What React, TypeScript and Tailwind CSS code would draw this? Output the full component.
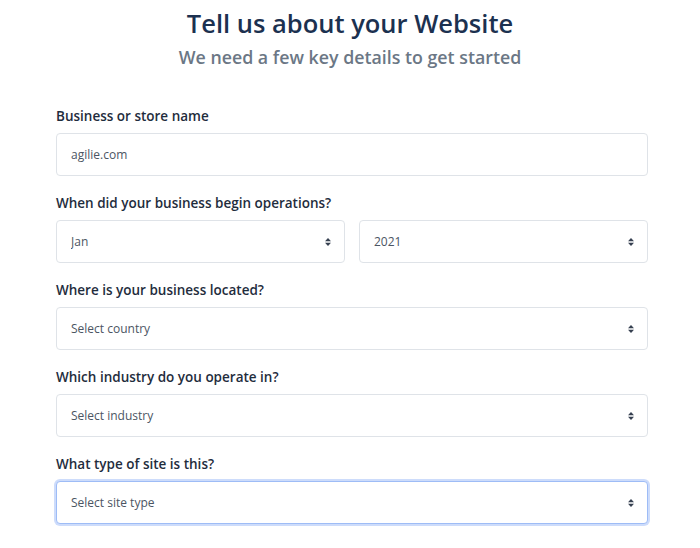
import { useState } from 'react'

const months = ['Jan', 'Feb', 'Mar', 'Apr', 'May', 'Jun', 'Jul', 'Aug', 'Sep', 'Oct', 'Nov', 'Dec']
const years = ['2024', '2023', '2022', '2021', '2020', '2019']

function Chevrons() {
  return (
    <svg width="8" height="10" viewBox="0 0 8 10" className="pointer-events-none absolute right-[13px] top-1/2 -translate-y-1/2">
      <path d="M4 1 L7 4.2 H1 Z" fill="#374151" />
      <path d="M4 9 L7 5.8 H1 Z" fill="#374151" />
    </svg>
  )
}

function Select({
  value,
  options,
  placeholder,
  focused,
}: {
  value?: string
  options: string[]
  placeholder?: string
  focused?: boolean
}) {
  const [v, setV] = useState(value ?? '')
  return (
    <div className="relative w-full">
      <select
        value={v}
        onChange={(e) => setV(e.target.value)}
        className={`h-[43px] w-full appearance-none rounded-[4px] bg-white pl-[14px] pr-8 text-[12px] text-[#4b5563] outline-none ${
          focused ? 'border border-[#9ebcf6] shadow-[0_0_0_2px_#cddcfb]' : 'border border-[#dfe3e8]'
        }`}
      >
        {placeholder && <option value="">{placeholder}</option>}
        {options.map((o) => (
          <option key={o} value={o}>
            {o}
          </option>
        ))}
      </select>
      <Chevrons />
    </div>
  )
}

function Field({ label, children }: { label: string; children: React.ReactNode }) {
  return (
    <div>
      <label className="mb-[8px] block text-[13.5px] font-semibold leading-[18px] text-[#1f2d3d]">{label}</label>
      {children}
    </div>
  )
}

export default function App() {
  const [name, setName] = useState('agilie.com')

  return (
    <div className="min-h-screen bg-white font-['Open_Sans',sans-serif]">
      {/* Header */}
      <div className="pt-[4px] text-center">
        <h1 className="text-[25.5px] font-semibold leading-[38px] text-[#1c3150]">Tell us about your Website</h1>
        <p className="mt-[3px] text-[17.8px] font-semibold leading-[24px] text-[#6b7785]">
          We need a few key details to get started
        </p>
      </div>

      {/* Form */}
      <form className="ml-[56px] mr-[52px] mt-[38px] flex flex-col gap-[18px]" onSubmit={(e) => e.preventDefault()}>
        <Field label="Business or store name">
          <input
            value={name}
            onChange={(e) => setName(e.target.value)}
            className="h-[43px] w-full rounded-[4px] border border-[#dfe3e8] bg-white px-[14px] text-[12px] text-[#4b5563] outline-none"
          />
        </Field>

        <Field label="When did your business begin operations?">
          <div className="grid grid-cols-2 gap-[14px]">
            <Select value="Jan" options={months} />
            <Select value="2021" options={years} />
          </div>
        </Field>

        <Field label="Where is your business located?">
          <Select placeholder="Select country" options={['United States', 'United Kingdom', 'Ukraine', 'Canada']} />
        </Field>

        <Field label="Which industry do you operate in?">
          <Select placeholder="Select industry" options={['Retail', 'Software', 'Services', 'Education']} />
        </Field>

        <Field label="What type of site is this?">
          <Select placeholder="Select site type" options={['E-commerce', 'Blog', 'Portfolio', 'Corporate']} focused />
        </Field>
      </form>
    </div>
  )
}
